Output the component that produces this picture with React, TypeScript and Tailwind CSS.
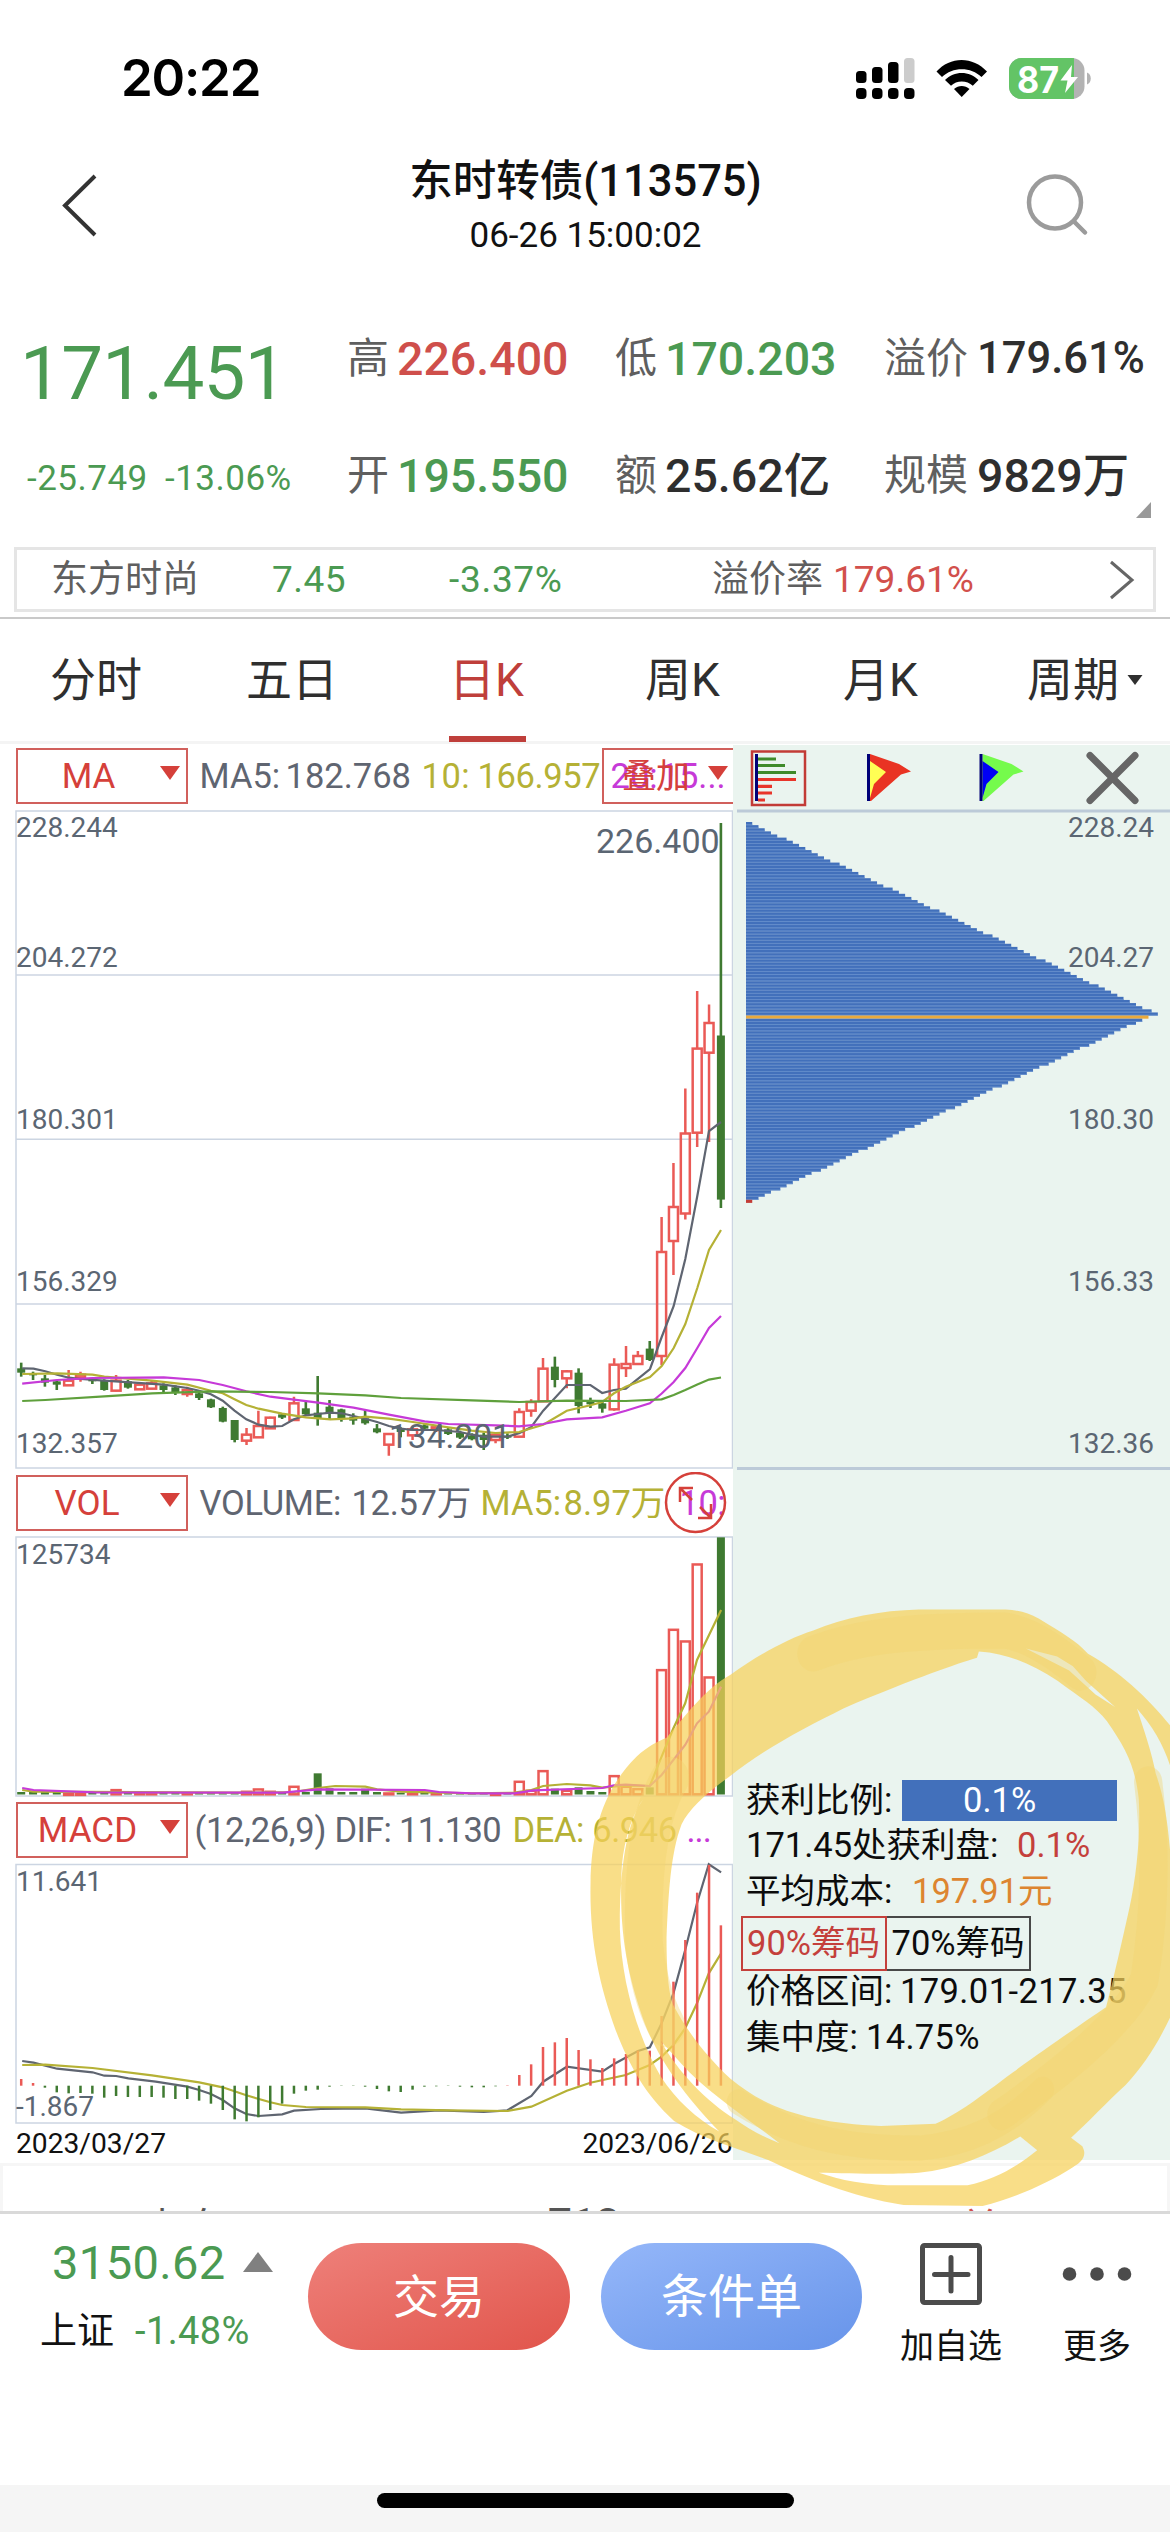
import type { ReactNode } from "react";

const RED = "#ea5a56";
const GREEN = "#3f7a31";
const GRID = "#ccd5e2";
const OLIVE = "#b5b135";
const GRAY = "#5f6571";
const MAGENTA = "#c63ad8";

const FONT = "font-['Roboto','Noto_Sans_CJK_SC',sans-serif]";

const step = (715 + 5.9 - 21.2) / 59;
const cx = (i: number) => 21.2 + step * i;

type Candle = [up: number, high: number, top: number, bottom: number, low: number];

// High / body top / body bottom / low in thirds of a pixel below y = 1340.
const calm: Candle[] = [
  [0, 68, 85, 98, 110], [0, 95, 100, 106, 120], [0, 105, 115, 128, 140], [0, 122, 124, 134, 150],
  [1, 90, 122, 136, 138], [1, 95, 104, 112, 125], [0, 115, 118, 124, 132], [0, 118, 122, 150, 152],
  [1, 105, 122, 152, 154], [0, 120, 124, 143, 146], [1, 128, 134, 148, 150], [1, 122, 130, 146, 148],
  [0, 130, 136, 150, 158], [0, 136, 142, 156, 165], [1, 140, 150, 162, 170], [0, 155, 160, 174, 180],
  [0, 176, 178, 202, 204], [0, 200, 204, 245, 247], [0, 240, 240, 300, 307], [1, 264, 284, 302, 315],
  [1, 212, 258, 292, 294], [1, 230, 233, 265, 267], [0, 220, 223, 233, 237], [1, 170, 190, 240, 242],
  [0, 182, 205, 223, 226], [0, 108, 218, 235, 257], [0, 180, 200, 222, 240], [0, 206, 208, 237, 245],
  [0, 220, 230, 242, 254], [0, 210, 235, 250, 254], [0, 252, 265, 277, 280], [1, 280, 282, 314, 347],
  [0, 262, 264, 276, 292], [1, 262, 268, 286, 300], [0, 253, 256, 266, 270], [1, 255, 262, 268, 276],
  [0, 262, 268, 282, 285], [0, 272, 278, 293, 297], [0, 280, 286, 298, 301], [0, 278, 284, 300, 330],
  [1, 280, 284, 300, 310], [0, 280, 287, 293, 297], [1, 205, 216, 290, 292], [1, 178, 186, 212, 230],
  [1, 54, 86, 184, 186], [0, 50, 80, 120, 142], [1, 90, 94, 115, 145], [0, 85, 98, 198, 220],
  [0, 173, 185, 193, 204], [0, 183, 190, 206, 218], [1, 55, 74, 208, 212],
];
const surge: Candle[] = [
  [1, 1346, 1364, 1368, 1377], [1, 1351, 1356, 1364, 1364], [0, 1341, 1348.6, 1360, 1361],
  [1, 1217, 1252, 1356, 1365], [1, 1163, 1207, 1241, 1275], [1, 1088.6, 1133.5, 1213.5, 1219.6],
  [1, 991, 1048.6, 1132.7, 1147], [1, 1004.5, 1023, 1052.7, 1142], [0, 823, 1035.5, 1199.6, 1208],
];
const candles: Candle[] = [
  ...calm.map(([u, ...v]) => [u, ...v.map((n) => 1340 + n / 3)] as Candle),
  ...surge,
];

const volumeTops = [
  996, 996, 996, 996, 1000, 1000, 998, 998, 988, 998, 998, 998, 998, 998, 998, 998, 998, 998, 998, 993,
  986, 993, 996, 978, 996, 940, 985, 996, 996, 986, 996, 998, 998, 998, 998, 998, 1000, 1000, 1000, 1000,
  1000, 1000, 963, 990, 931, 986, 990, 982, 993, 996, 946, 978, 985, 982, 628, 507, 542, 311, 650, 232,
];

const macdEnds = [
  897, 909, 923, 937, 940, 939, 941, 953, 948, 951, 951, 951, 953, 957, 957, 962, 971, 990, 1018, 1024,
  1012, 990, 971, 941, 932, 929, 920, 918, 918, 920, 927, 934, 936, 929, 920, 919, 918, 920, 922, 922,
  919, 916, 885, 853, 801, 787, 774, 810, 838, 864, 835, 822, 812, 812, 708, 605, 480, 338, 255, 436,
];

const line = (pts: number[][], base: number, tail: number[][] = []) =>
  [...pts.map(([x, y]) => [x / 2.119, base + y / 3]), ...tail.map(([x, y]) => [560 + x / 3, y])]
    .map(([x, y]) => `${x.toFixed(1)},${y.toFixed(1)}`)
    .join(" ");

const ma5 = line(
  [[47, 85], [71, 86], [96, 94], [121, 104], [146, 113], [171, 117], [221, 122], [347, 134], [397, 144], [422, 152], [447, 163], [472, 182], [497, 212], [522, 238], [548, 254], [573, 260], [598, 258], [623, 238], [648, 226], [674, 222], [700, 218], [724, 220], [749, 228], [774, 236], [799, 246], [824, 258], [849, 266], [875, 270], [925, 270], [975, 276], [1000, 284], [1025, 290], [1075, 290], [1100, 280], [1125, 262], [1151, 212], [1201, 135], [1251, 135], [1276, 159], [1301, 150], [1326, 146]],
  1340,
  [[270, 1369], [305, 1337], [341, 1306], [376, 1259], [412, 1196], [447, 1131], [483, 1122]],
);
const ma10 = line(
  [[47, 102], [121, 100], [196, 104], [221, 110], [322, 122], [397, 134], [447, 152], [472, 160], [497, 178], [522, 195], [548, 206], [598, 221], [648, 232], [700, 238], [749, 235], [774, 230], [824, 236], [875, 246], [950, 262], [1000, 272], [1050, 279], [1100, 276], [1151, 254], [1201, 212], [1251, 196], [1276, 186], [1301, 160], [1326, 140]],
  1340,
  [[270, 1377], [305, 1366], [341, 1348], [376, 1324], [412, 1288], [447, 1250], [483, 1230]],
);
const ma20 = line(
  [[47, 131], [121, 120], [196, 114], [347, 112], [422, 120], [472, 135], [522, 154], [573, 170], [623, 179], [674, 188], [749, 203], [824, 224], [900, 244], [950, 252], [1050, 256], [1100, 259], [1151, 252], [1201, 238], [1276, 232], [1326, 212], [1377, 190]],
  1340,
  [[305, 1393.5], [341, 1382], [376, 1368], [412, 1348], [447, 1328], [483, 1316]],
);
const ma60 = line(
  [[47, 183], [96, 180], [221, 169], [322, 160], [447, 154], [573, 156], [674, 160], [774, 166], [850, 174], [1000, 181], [1100, 186], [1201, 182], [1326, 183], [1402, 178]],
  1340,
  [[341, 1395], [376, 1390], [412, 1384.5], [447, 1379.6], [483, 1377.5]],
);
const vol5 = line(
  [[47, 990], [71, 995], [500, 998], [623, 996], [674, 984], [710, 978], [774, 980], [799, 988], [850, 995], [1000, 1000], [1090, 998], [1126, 990], [1151, 978], [1201, 972], [1251, 976], [1276, 983], [1326, 976], [1377, 978], [1402, 890], [1427, 805], [1452, 730], [1477, 600], [1528, 450]],
  1460,
);
const vol10 = line(
  [[47, 984], [71, 990], [200, 997], [600, 998], [674, 988], [900, 990], [930, 996], [1000, 1000], [1090, 1000], [1130, 991], [1276, 984], [1301, 976], [1326, 974], [1377, 978], [1402, 945], [1452, 855], [1477, 790], [1502, 755], [1528, 680]],
  1460,
);
const dif = line(
  [[47, 843], [71, 848], [121, 866], [196, 877], [221, 887], [246, 888], [272, 895], [330, 905], [397, 920], [422, 930], [447, 942], [472, 960], [497, 985], [522, 1002], [548, 1008], [598, 1003], [623, 992], [680, 987], [774, 985], [850, 998], [930, 991], [1025, 996], [1075, 991], [1126, 948], [1151, 905], [1201, 860], [1276, 875], [1301, 852], [1352, 813], [1377, 802], [1402, 730], [1427, 640], [1452, 510], [1477, 370], [1502, 253], [1528, 277]],
  1780,
);
const dea = line(
  [[47, 855], [96, 854], [196, 864], [322, 886], [422, 907], [472, 922], [522, 946], [573, 967], [598, 975], [648, 981], [774, 982], [850, 988], [950, 991], [1075, 993], [1126, 980], [1201, 932], [1251, 908], [1326, 885], [1377, 855], [1402, 830], [1427, 795], [1452, 745], [1477, 670], [1502, 580], [1528, 520]],
  1780,
);

function StatusBar() {
  return (
    <div className="flex h-[155px] items-center justify-between pl-[121px] pr-[79px]">
      <span className="font-['Inter'] text-[51px] font-semibold leading-none tracking-[-1.2px] text-black">20:22</span>
      <svg width="236" height="44" viewBox="855 55 236 44">
        {[[856, 70], [872, 66], [888, 61]].map(([x, y]) => (
          <rect key={x} x={x} y={y} width="10.5" height={82 - y} rx="3.5" />
        ))}
        <rect x="904" y="57" width="10.5" height="25" rx="3.5" fill="#cccccc" />
        {[856, 872, 888, 904].map((x) => (
          <rect key={x} x={x} y="87" width="10.5" height="11" rx="4" />
        ))}
        <path d="M936.5 70.5C950 55 973 55 987 70.5L981.500 76C971 65.500 952.500 65.500 942 76Z" />
        <path d="M945 79C954 69.500 969.500 69.500 978.500 79L972.800 84.700C967 79 956.500 79 951 84.700Z" />
        <path d="M954 88C958.500 84 965 84 969.500 88L961.700 96Z" />
        <clipPath id="battery"><rect x="1009" y="57" width="75.500" height="41" rx="12.500" /></clipPath>
        <g clipPath="url(#battery)">
          <rect x="1009" y="57" width="76" height="41" fill="#b3b3b3" />
          <rect x="1009" y="57" width="65" height="41" fill="#63c466" />
        </g>
        <path d="M1087 71.500C1092 73 1092 82 1087 83.500Z" fill="#b3b3b3" />
        <text x="1017" y="91.500" fontFamily="Inter" fontWeight="700" fontSize="37" textLength="42" lengthAdjust="spacingAndGlyphs" fill="#fff">87</text>
        <path d="M1072 64L1060.500 79.500H1067.500L1065 92L1078 76H1071Z" fill="#fff" />
      </svg>
    </div>
  );
}

function TitleBar() {
  return (
    <div className="flex h-[125px] items-start justify-between pl-[60px] pr-[81px]">
      <svg className="mt-[16px]" width="40" height="70" viewBox="60 171 40 70" fill="none" stroke="#333" strokeWidth="4">
        <path d="M95 176L65 205.500L95 235" />
      </svg>
      <div className="ml-[46px] flex flex-col items-center text-[#111]">
        <div className="mt-[5px] text-[43.5px] font-medium leading-[44px] whitespace-nowrap">东时转债(113575)</div>
        <div className="mt-[14px] text-[35px] leading-[36px]">06-26 15:00:02</div>
      </div>
      <svg className="mt-[16px]" width="64" height="66" viewBox="1025 171 64 66" fill="none" stroke="#9b9b9b" strokeWidth="4.500" strokeLinecap="round">
        <circle cx="1055" cy="202.500" r="26" />
        <path d="M1074 221.500L1085 232.500" />
      </svg>
    </div>
  );
}

function Stat({ label, value, cell, gap, tone }: { label: string; value: string; cell: string; gap: string; tone: string }) {
  return (
    <div className={`flex items-center whitespace-nowrap ${cell}`}>
      <span className="text-[42px] text-[#5f5f5f]">{label}</span>
      <span className={`font-medium ${gap} ${tone}`}>{value}</span>
    </div>
  );
}

function Quote() {
  return (
    <div className="h-[267px] leading-none">
      <div className="flex h-[158px] items-center">
        <div className="w-[347px] pl-[20px] pt-[30px] text-[74.5px] tracking-[-0.7px] text-[#4b9a52]">171.451</div>
        <Stat label="高" value="226.400" cell="w-[268px]" gap="ml-[8px] text-[46.5px]" tone="text-[#cf4f4b]" />
        <Stat label="低" value="170.203" cell="w-[269px]" gap="ml-[8px] text-[46.5px]" tone="text-[#4b9a52]" />
        <Stat label="溢价" value="179.61%" cell="w-[286px]" gap="ml-[9px] text-[43.5px]" tone="text-[#2e2e2e]" />
      </div>
      <div className="flex h-[76px] items-center">
        <div className="flex w-[347px] pl-[27px] pt-[4px] text-[35px] tracking-[0.5px] text-[#4b9a52]">
          <span className="w-[138px]">-25.749</span>
          <span>-13.06%</span>
        </div>
        <Stat label="开" value="195.550" cell="w-[268px]" gap="ml-[8px] text-[46.5px]" tone="text-[#4b9a52]" />
        <Stat label="额" value="25.62亿" cell="w-[269px]" gap="ml-[8px] text-[46.5px]" tone="text-[#2e2e2e]" />
        <Stat label="规模" value="9829万" cell="w-[286px]" gap="ml-[9px] text-[46.5px]" tone="text-[#2e2e2e]" />
      </div>
      <div className="flex justify-end pr-[19px]">
        <svg className="-mt-[12px]" width="15" height="16"><path d="M15 0V16H0Z" fill="#999" /></svg>
      </div>
    </div>
  );
}

function StockLink() {
  return (
    <div className="mx-[14px] flex h-[65px] items-center border-[3px] border-[#e5e5e5] text-[37px] leading-none whitespace-nowrap">
      <span className="ml-[34px] w-[221px] text-[#5f5f5f]">东方时尚</span>
      <span className="w-[177px] text-[#4b9a52] tracking-[0.5px]">7.45</span>
      <span className="w-[263px] text-[#4b9a52] tracking-[0.7px]">-3.37%</span>
      <span className="w-[121px] text-[#5f5f5f]">溢价率</span>
      <span className="w-[276px] text-[#d2504c]">179.61%</span>
      <svg width="26" height="42" viewBox="1108 558 26 42" fill="none" stroke="#666" strokeWidth="3"><path d="M1110 561L1131 579L1110 597" /></svg>
    </div>
  );
}

function Tabs() {
  const tabs: [string, string][] = [
    ["分时", "w-[196px]"], ["五日", "w-[203px]"], ["日K", "w-[196px]"], ["周K", "w-[198px]"], ["月K", "w-[184px]"], ["周期", "w-[100px]"],
  ];
  return (
    <div className="mt-[5px] h-[127px] border-t-[2px] border-t-[#c9c9c9] border-b-[3px] border-b-[#f4f4f4]">
      <div className="flex h-[117px] items-center pl-[50px] pt-[4px] text-[46px] leading-none whitespace-nowrap text-[#2f2f2f]">
        {tabs.map(([t, w]) => (
          <div key={t} className={`${w} ${t === "日K" ? "text-[#bf3f3b]" : ""}`}>{t}</div>
        ))}
        <svg width="16" height="12" viewBox="0 0 16 12"><path d="M0.500 1H15.500L8 11Z" fill="#2f2f2f" /></svg>
      </div>
      <div className="ml-[449px] h-[6px] w-[77px] bg-[#bf3f3b]" />
    </div>
  );
}

function Picker({ name, label, arrow }: { name: string; label: string; arrow: string }) {
  return (
    <div className="flex h-[56px] w-[172px] shrink-0 items-center border-[2px] border-[#d1605c] text-[35px] text-[#d5403a]">
      <span className={`text-center ${label}`}>{name}</span>
      <svg className={`-mt-[6px] shrink-0 ${arrow}`} width="20" height="14"><path d="M0 0H20L10 14Z" fill="#d5403a" /></svg>
    </div>
  );
}

function Legend({ children }: { children: ReactNode }) {
  return (
    <div className="relative flex h-[62px] items-center overflow-hidden pl-[15.500px] text-[34.500px] leading-none whitespace-nowrap">{children}</div>
  );
}

const axis = { fontSize: 28, fill: "#5b6673" };

function KChart() {
  return (
    <svg className="block" width="733" height="664" viewBox="0 808 733 664">
      <rect x="16" y="811" width="716.500" height="657" fill="#fff" stroke={GRID} strokeWidth="1.500" />
      {[975, 1139.300, 1304].map((y) => <path key={y} d={`M16 ${y}H733`} stroke={GRID} strokeWidth="1.500" />)}
      {candles.map(([up, h, t, b, l], i) =>
        up ? (
          <g key={i} fill="none" stroke={RED} strokeWidth="2.500">
            <path d={`M${cx(i)} ${h}V${t}M${cx(i)} ${b}V${l}`} />
            <rect x={cx(i) - 4.500} y={t} width="9" height={Math.max(b - t, 1.500)} />
          </g>
        ) : (
          <g key={i} fill={GREEN}>
            <rect x={cx(i) - 1.300} y={h} width="2.600" height={l - h} />
            <rect x={cx(i) - 4} y={t} width="8" height={b - t} />
          </g>
        ),
      )}
      <g fill="none" strokeWidth="2.200">
        <polyline points={ma5} stroke={GRAY} />
        <polyline points={ma10} stroke={OLIVE} />
        <polyline points={ma20} stroke={MAGENTA} />
        <polyline points={ma60} stroke="#5fa03c" />
      </g>
      <g {...axis}>
        <text x="16" y="837">228.244</text>
        <text x="16" y="967">204.272</text>
        <text x="16" y="1129">180.301</text>
        <text x="16" y="1291">156.329</text>
        <text x="16" y="1453">132.357</text>
        <text x="596" y="853" fontSize="34">226.400</text>
        <text x="389" y="1448" fontSize="33.500">134.201</text>
      </g>
    </svg>
  );
}

function VolumeChart() {
  const floor = 1794.500;
  return (
    <svg className="block" width="733" height="265" viewBox="0 1534 733 265">
      <rect x="16" y="1537" width="716.500" height="259" fill="#fff" stroke={GRID} strokeWidth="1.500" />
      {volumeTops.map((v, i) => {
        const y = 1460 + v / 3;
        return candles[i][0] ? (
          <rect key={i} x={cx(i) - 4.500} y={y + 0.800} width="9" height={Math.max(floor - y - 1, 0.800)} fill="none" stroke={RED} strokeWidth="2.500" />
        ) : (
          <rect key={i} x={cx(i) - 4} y={y} width="8" height={floor - y} fill={GREEN} />
        );
      })}
      <g fill="none" strokeWidth="2.200">
        <polyline points={vol5} stroke={OLIVE} />
        <polyline points={vol10} stroke={MAGENTA} />
      </g>
      <text x="16" y="1564" {...axis}>125734</text>
    </svg>
  );
}

function MacdChart() {
  const zero = 2085.700;
  return (
    <svg className="block" width="733" height="299" viewBox="0 1861 733 299">
      <rect x="16" y="1864.500" width="716.500" height="258.500" fill="#fff" stroke={GRID} strokeWidth="1.500" />
      <g fill="none" strokeWidth="2.200">
        <polyline points={dif} stroke={GRAY} />
        <polyline points={dea} stroke={OLIVE} />
      </g>
      {macdEnds.map((v, i) => {
        const y = 1780 + v / 3;
        return <path key={i} d={`M${cx(i)} ${zero}V${y}`} stroke={y < zero ? RED : GREEN} strokeWidth="2.500" />;
      })}
      <g {...axis}>
        <text x="16" y="1891">11.641</text>
        <text x="16" y="2116">-1.867</text>
      </g>
      <g fontSize="28.200" fill="#111">
        <text x="16" y="2152.500">2023/03/27</text>
        <text x="582.500" y="2152.500">2023/06/26</text>
      </g>
    </svg>
  );
}

function PanelTools() {
  return (
    <svg className="block" width="437" height="63" viewBox="733 745 437 63">
      <rect x="752" y="751.500" width="53" height="53.500" fill="none" stroke="#c23b36" strokeWidth="2.500" />
      <g strokeWidth="3.200">
        <path d="M758 759H776M758 765.500H785M758 772.500H796" stroke="#3f8a2a" />
        <path d="M758 779.500H796M758 786.300H772M758 793H772M758 800H765" stroke="#e8352a" />
      </g>
      <rect x="755" y="754" width="3" height="47" fill="#000078" />
      {[["#e93323", "#ffff54", 0], ["#75fb4c", "#0000f5", 112.500]].map(([outer, inner, dx]) => (
        <g key={outer} transform={`translate(${dx} 0)`}>
          <path d="M870 754L899 764L911 771.500L901 774.500L871 801H870Z" fill={outer as string} />
          <path d="M870 761L886 772L874 784L870 798Z" fill={inner as string} />
          <rect x="867" y="754" width="3" height="47" fill="#000078" />
        </g>
      ))}
      <path d="M1090 755.500L1135 800.500M1135 755.500L1090 800.500" stroke="#666" strokeWidth="7" strokeLinecap="round" />
    </svg>
  );
}

function ChipChart() {
  const pitch = 3.122;
  const rows = Array.from({ length: 122 }, (_, k) => {
    const raw = k <= 61 ? 6 + (k * 405) / 61 : 402 - ((k - 62) * 399) / 59.500;
    return Math.max(3, Math.round(raw / 3.120) * 3.120);
  });
  return (
    <svg className="block" width="437" height="664" viewBox="733 808 437 664">
      <rect x="737" y="809.500" width="433" height="3" fill="#bccad8" />
      <rect x="737" y="1467" width="433" height="3" fill="#bccad8" />
      {rows.map((w, k) => (
        <g key={k}>
          <rect x="746" y={822 + k * pitch} width={w} height={pitch} fill={k === 62 ? "#e9a93c" : k === 121 ? "#c23b36" : "#4270bb"} />
          {k !== 62 && k < 121 && <rect x="746" y={822 + k * pitch + 2.300} width={w} height="0.800" fill="#6b93cf" />}
        </g>
      ))}
      <g {...axis} textAnchor="end">
        <text x="1154" y="837">228.24</text>
        <text x="1154" y="967">204.27</text>
        <text x="1154" y="1129">180.30</text>
        <text x="1154" y="1291">156.33</text>
        <text x="1154" y="1453">132.36</text>
      </g>
    </svg>
  );
}

function ChipInfo() {
  return (
    <div className="pl-[13px] pt-[306px] text-[34.500px] leading-none whitespace-nowrap text-[#0c0c0c]">
      <div className="flex h-[44px] items-center">
        <span className="w-[156px]">获利比例:</span>
        <span className="flex h-[41px] w-[215px] items-center bg-[#4270bb] pl-[61px] text-white">0.1%</span>
      </div>
      <div className="flex h-[46px] items-center">
        <span className="w-[271px]">171.45处获利盘:</span>
        <span className="text-[#c4403b]">0.1%</span>
      </div>
      <div className="flex h-[47px] items-center">
        <span className="w-[166px]">平均成本:</span>
        <span className="text-[#dd8530]">197.91元</span>
      </div>
      <div className="-ml-[5px] flex h-[57px] items-center">
        <span className="flex h-[55px] w-[145.500px] items-center border-[2.500px] border-[#c4403b] pl-[4px] text-[#c4403b]">90%筹码</span>
        <span className="flex h-[55px] w-[144px] items-center border-[2.500px] border-l-0 border-[#484848] pl-[5px]">70%筹码</span>
      </div>
      <div className="flex h-[38px] items-center">
        <span className="w-[154px]">价格区间:</span>
        <span className="tracking-[0.4px]">179.01-217.35</span>
      </div>
      <div className="flex h-[54px] items-center">
        <span className="w-[120px]">集中度:</span>
        <span className="tracking-[0.3px]">14.75%</span>
      </div>
    </div>
  );
}

function Marker() {
  return (
    <svg className="pointer-events-none absolute top-[835px] left-[580px]" width="590" height="660" viewBox="0 0 1568 1568" preserveAspectRatio="none">
      <g fill="#f6d15a" fillOpacity="0.720" fillRule="evenodd">
        <path d="M28 720C30 600 60 500 150 420C180 395 205 385 230 375C300 300 340 255 400 225C470 180 550 140 620 120C700 90 800 72 900 70L1130 70C1170 72 1190 78 1220 92C1280 125 1320 145 1350 175C1430 215 1510 280 1568 345L1568 1040C1530 1110 1500 1150 1450 1200C1400 1240 1350 1290 1305 1325L1335 1345C1350 1370 1330 1385 1310 1395C1240 1435 1150 1470 1070 1487L860 1485C720 1465 600 1420 500 1378C420 1350 330 1330 250 1285C170 1220 130 1150 95 1070C50 960 25 850 28 720Z
          M1055 185C1000 200 900 230 700 305C600 350 500 395 400 465C330 510 290 545 270 580C240 650 235 750 230 850C230 930 235 980 248 1010C290 1080 340 1135 400 1185C500 1260 620 1290 800 1297L945 1292C1010 1265 1060 1230 1150 1170C1250 1105 1340 1050 1398 1015C1420 940 1440 860 1460 780C1480 700 1490 600 1485 520C1475 440 1450 400 1400 335C1370 300 1330 280 1270 240C1200 200 1140 175 1060 170Z
          M1185 163L1268 182L1310 205L1345 240L1422 302L1370 272L1300 215Z
          M1480 305C1520 345 1550 390 1568 440V640C1560 560 1550 510 1530 460C1520 410 1500 360 1480 305Z
          M168 520C120 580 105 700 106 830C110 950 150 1080 215 1180C255 1235 310 1280 370 1310C300 1245 220 1160 175 1060C130 950 104 850 110 700C112 640 130 570 168 520Z
          M215 1095C260 1170 340 1240 410 1280C450 1305 490 1325 530 1338C430 1270 330 1210 270 1150Z
          M635 1408C720 1410 850 1412 900 1408C1000 1400 1090 1365 1170 1322L1215 1355C1160 1395 1100 1425 1030 1438H850C760 1438 690 1425 635 1408Z" />
      </g>
      <g fill="none" stroke="#f3d470" strokeOpacity="0.400" strokeLinecap="round" strokeLinejoin="round">
        <path d="M240 470C180 560 165 700 170 860C180 950 200 1010 230 1060" strokeWidth="100" />
        <path d="M620 175C750 130 900 120 1130 120C1200 130 1270 175 1330 220" strokeWidth="85" />
        <path d="M1510 480C1530 620 1530 780 1500 950C1440 1060 1250 1190 1120 1270" strokeWidth="75" />
        <path d="M420 1240C560 1320 700 1350 900 1350C1030 1340 1130 1300 1230 1210" strokeWidth="60" />
      </g>
    </svg>
  );
}

function ChartArea() {
  return (
    <div className="relative flex h-[1415px]">
      <div className="w-[733px]">
        <div className="h-[63px]">
          <Legend>
            <Picker name="MA" label="w-[142px]" arrow="" />
            <span className="ml-[12px] w-[86px] text-[#5f6571]">MA5:</span>
            <span className="w-[136px] text-[#5f6571]">182.768</span>
            <span className="w-[56px] text-[#b5b135] tracking-[0.5px]">10:</span>
            <span className="w-[133px] text-[#b5b135] tracking-[-0.4px]">166.957</span>
            <span className="w-[49px] text-[#c63ad8]">20:</span>
            <span className="text-[#c63ad8]">15...</span>
            <div className="absolute top-[3px] left-[602px] flex h-[56px] w-[140px] items-center border-[2px] border-[#d1605c] pl-[18px] text-[34px] text-[#d5403a]">
              叠加
              <svg className="-mt-[6px] ml-[18px] shrink-0" width="20" height="14"><path d="M0 0H20L10 14Z" fill="#d5403a" /></svg>
            </div>
          </Legend>
        </div>
        <KChart />
        <Legend>
          <Picker name="VOL" label="w-[139px]" arrow="ml-[3px]" />
          <span className="ml-[12px] w-[152px] text-[#5f6571] tracking-[-0.3px]">VOLUME:</span>
          <span className="w-[129px] text-[#5f6571] tracking-[-0.3px]">12.57万</span>
          <span className="w-[83px] text-[#b5b135]">MA5:</span>
          <span className="w-[116px] text-[#b5b135]">8.97万</span>
          <span className="text-[#c63ad8] tracking-[-0.5px]">10:</span>
          <svg className="absolute top-0 left-[664px]" width="63" height="62" viewBox="664 1472 63 62" fill="none" stroke="#d5403a" strokeWidth="2.500">
            <circle cx="695.500" cy="1502.500" r="29.500" />
            <path d="M680 1502V1488H693M680 1488L692 1500M711 1504V1518H698M711 1518L700 1507" />
          </svg>
        </Legend>
        <VolumeChart />
        <Legend>
          <Picker name="MACD" label="w-[140px]" arrow="ml-[2px]" />
          <span className="ml-[7px] w-[140px] text-[#5f6571] tracking-[-0.3px]">(12,26,9)</span>
          <span className="w-[178px] text-[#5f6571] tracking-[-0.7px]">DIF: 11.130</span>
          <span className="w-[174px] text-[#b5b135] tracking-[-0.4px]">DEA: 6.946</span>
          <span className="text-[#c63ad8] tracking-[-1px]">...</span>
        </Legend>
        <MacdChart />
      </div>
      <div className="w-[437px] bg-[#eaf4ef]">
        <PanelTools />
        <ChipChart />
        <ChipInfo />
      </div>
      <Marker />
    </div>
  );
}

function BottomBar() {
  return (
    <div className="flex h-[274px] border-t-[3px] border-[#d9d9d9] leading-none whitespace-nowrap">
      <div className="w-[308px] pt-[24px]">
        <div className="flex h-[48px] items-center pl-[52px] text-[47px] text-[#4b9a52]">
          <span className="w-[191px] tracking-[0.4px]">3150.62</span>
          <svg width="30" height="20"><path d="M15 0L30 20H0Z" fill="#808080" /></svg>
        </div>
        <div className="mt-[26px] flex h-[38px] items-center pl-[40px] text-[37px]">
          <span className="w-[95px] text-[#111]">上证</span>
          <span className="text-[38px] text-[#4b9a52] tracking-[0.4px]">-1.48%</span>
        </div>
      </div>
      <div className="mt-[29px] flex h-[107px] w-[262px] items-center justify-center rounded-full bg-linear-to-br from-[#ee807a] to-[#e1544b] text-[46px] text-white">交易</div>
      <div className="mt-[29px] ml-[31px] flex h-[107px] w-[261px] items-center justify-center rounded-full bg-linear-to-br from-[#95b7f9] to-[#6794ea] text-[47px] text-white">条件单</div>
      <div className="ml-[37px] flex w-[104px] flex-col items-center pt-[29px] text-[34px] text-[#111]">
        <svg width="62" height="62" fill="none" stroke="#4b4b4b" strokeWidth="5">
          <rect x="2.500" y="2.500" width="57" height="57" rx="2" />
          <path d="M31 14.500V48M14.500 31.500H48" strokeLinecap="round" />
        </svg>
        <span className="mt-[24px]">加自选</span>
      </div>
      <div className="ml-[42px] flex w-[104px] flex-col items-center pt-[29px] text-[34px] text-[#111]">
        <svg width="70" height="62" fill="#4b4b4b"><circle cx="7.500" cy="31" r="6.800" /><circle cx="35" cy="31" r="6.800" /><circle cx="62.500" cy="31" r="6.800" /></svg>
        <span className="mt-[24px]">更多</span>
      </div>
    </div>
  );
}

export default function App() {
  return (
    <div className={`h-[2532px] w-[1170px] overflow-hidden bg-white ${FONT}`}>
      <StatusBar />
      <TitleBar />
      <Quote />
      <StockLink />
      <Tabs />
      <div className="h-[1px]" />
      <ChartArea />
      <div className="mt-[3px] flex h-[48px] overflow-hidden border-[3px] border-b-0 border-[#f6f6f6] text-[42px] leading-none text-[#555]">
        <div className="w-[545px] pt-[43px] pl-[138px]">卖盘</div>
        <div className="w-[403px] pt-[37px] font-medium">718</div>
        <div className="pt-[43px] pl-[8px] text-[#d2504c]">单</div>
      </div>
      <BottomBar />
      <div className="flex h-[47px] justify-center bg-[#f5f5f5] pt-[8px]">
        <div className="h-[15px] w-[417px] rounded-full bg-black" />
      </div>
    </div>
  );
}
